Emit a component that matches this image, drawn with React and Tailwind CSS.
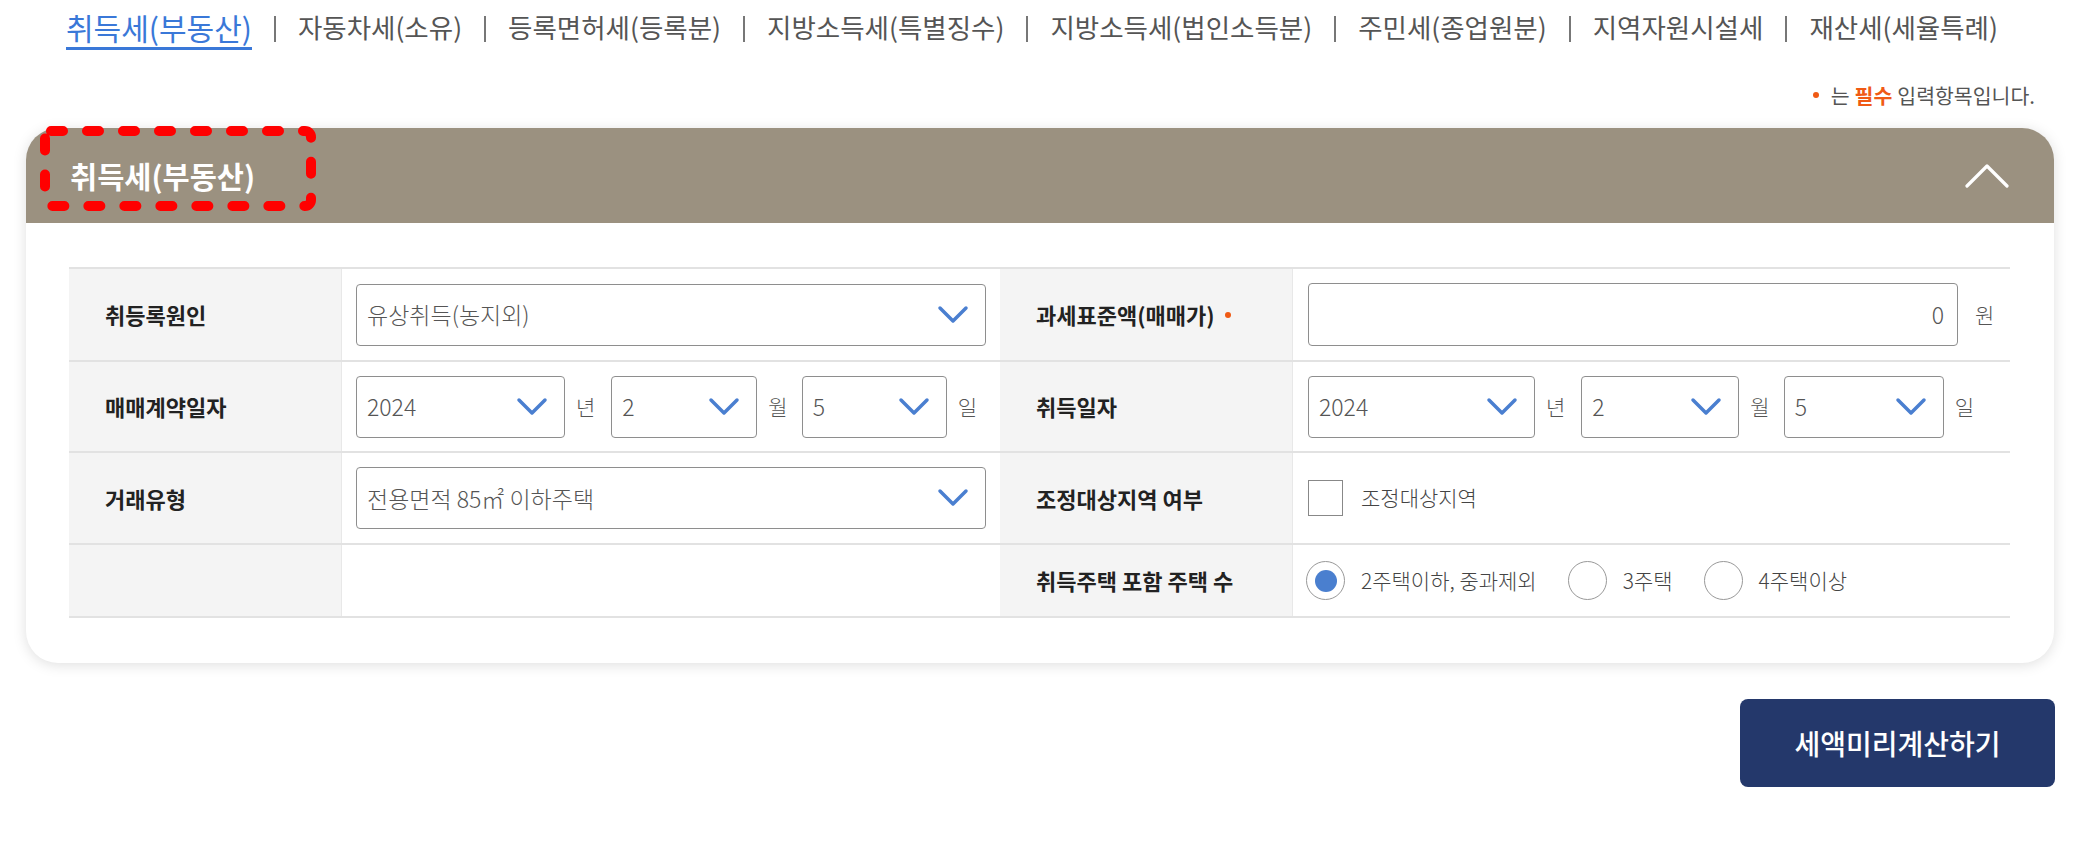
import React from "react";

const tabs = [
  "취득세(부동산)",
  "자동차세(소유)",
  "등록면허세(등록분)",
  "지방소득세(특별징수)",
  "지방소득세(법인소득분)",
  "주민세(종업원분)",
  "지역자원시설세",
  "재산세(세율특례)",
];

const Chevron = () => (
  <svg width="32" height="20" viewBox="0 0 32 20" fill="none">
    <polyline points="3,3 16,16 29,3" stroke="#4a7fd0" strokeWidth="3.5" strokeLinecap="round" strokeLinejoin="round" />
  </svg>
);

const Select = ({ value, width }) => (
  <div
    className={`flex items-center justify-between h-[62px] border border-[#8e8e8e] rounded-[4px] bg-white pl-[10px] pr-[16px] ${width}`}
  >
    <span className="text-[23px] font-light text-[#555]">{value}</span>
    <Chevron />
  </div>
);

const DateGroup = ({ widths }) => (
  <div className="flex items-center">
    <Select value="2024" width={widths[0]} />
    <span className="ml-[11px] mr-[16px] text-[21px] font-light text-[#555]">년</span>
    <Select value="2" width={widths[1]} />
    <span className="ml-[11px] mr-[14px] text-[21px] font-light text-[#555]">월</span>
    <Select value="5" width={widths[2]} />
    <span className="ml-[11px] text-[21px] font-light text-[#555]">일</span>
  </div>
);

const Label = ({ children, required }) => (
  <div className="flex items-center bg-[#f4f4f4] pl-[36px] text-[22px] font-semibold text-[#222]">
    {children}
    {required && <span className="ml-[10px] w-[6px] h-[6px] rounded-full bg-[#f05a14]"></span>}
  </div>
);

const Radio = ({ checked, label }) => (
  <div className="flex items-center">
    <div className="w-[39px] h-[39px] rounded-full border border-[#999] bg-white flex items-center justify-center">
      {checked && <div className="w-[22px] h-[22px] rounded-full bg-[#4a7fcf]"></div>}
    </div>
    <span className="ml-[16px] text-[21px] font-light text-[#444]">{label}</span>
  </div>
);

export default function App() {
  return (
    <div className="w-[2082px] min-h-[849px] bg-white font-['Noto_Sans_CJK_KR','Noto_Sans',sans-serif]">
      {/* Tabs */}
      <nav className="flex items-start pl-[66px] pt-[8px]">
        {tabs.map((t, i) => (
          <div key={t} className="flex items-start">
            {i > 0 && <span className="mx-[22px] mt-[8px] w-[2px] h-[26px] bg-[#777]"></span>}
            {i === 0 ? (
              <span className="text-[30px] leading-[38px] text-[#3a78d8] border-b-[3px] border-[#3a78d8] pb-[1px]">{t}</span>
            ) : (
              <span className="text-[26.5px] leading-[38px] text-[#555]">{t}</span>
            )}
          </div>
        ))}
      </nav>

      {/* Required note */}
      <div className="mt-[30px] pr-[47px] flex justify-end items-center h-[30px] text-[20.5px] text-[#555]">
        <span className="w-[6px] h-[6px] rounded-full bg-[#f05a14] mr-[12px]"></span>
        <span>는 </span>
        <span className="font-bold text-[#f05a14] mx-[5px]">필수</span>
        <span>입력항목입니다.</span>
      </div>

      {/* Card */}
      <section className="relative mt-[18px] ml-[26px] mr-[28px] rounded-[32px] bg-white shadow-[0_2px_14px_rgba(0,0,0,0.13)]">
        <div className="h-[95px] bg-[#9b9180] rounded-t-[32px] flex items-center justify-between pl-[44px] pr-[45px]">
          <h2 className="text-[29.5px] font-bold text-white">취득세(부동산)</h2>
          <svg width="44" height="24" viewBox="0 0 44 24" fill="none">
            <polyline points="2,22 22,2 42,22" stroke="#fff" strokeWidth="3.2" strokeLinecap="round" strokeLinejoin="round" />
          </svg>
        </div>

        {/* annotation box */}
        <svg className="absolute left-[14px] top-[-2px]" width="276" height="85" viewBox="0 0 276 85" fill="none">
          <rect x="5" y="5" width="266" height="75" rx="6" stroke="#ff0000" strokeWidth="10" strokeDasharray="12 24" strokeLinecap="round" />
        </svg>

        <div className="pt-[44px] pb-[45px] pl-[43px] pr-[44px]">
          <div className="border-t-2 border-[#e2e2e2]">
            {/* Row 1 */}
            <div className="grid grid-cols-[272px_659px_292px_1fr] h-[93px] border-b-2 border-[#e2e2e2]">
              <Label>취등록원인</Label>
              <div className="flex items-center px-[14px] border-l border-[#e8e8e8]">
                <Select value="유상취득(농지외)" width="w-full" />
              </div>
              <Label required>과세표준액(매매가)</Label>
              <div className="flex items-center pl-[15px] border-l border-[#e8e8e8]">
                <div className="flex items-center justify-end w-[650px] h-[63px] border border-[#8e8e8e] rounded-[4px] pr-[13px] text-[23px] font-light text-[#555]">
                  0
                </div>
                <span className="ml-[17px] text-[21px] font-light text-[#555]">원</span>
              </div>
            </div>

            {/* Row 2 */}
            <div className="grid grid-cols-[272px_659px_292px_1fr] h-[91px] border-b-2 border-[#e2e2e2]">
              <Label>매매계약일자</Label>
              <div className="flex items-center px-[14px] border-l border-[#e8e8e8]">
                <DateGroup widths={["w-[209px]", "w-[146px]", "w-[145px]"]} />
              </div>
              <Label>취득일자</Label>
              <div className="flex items-center pl-[15px] border-l border-[#e8e8e8]">
                <DateGroup widths={["w-[227px]", "w-[158px]", "w-[160px]"]} />
              </div>
            </div>

            {/* Row 3 */}
            <div className="grid grid-cols-[272px_659px_292px_1fr] h-[92px] border-b-2 border-[#e2e2e2]">
              <Label>거래유형</Label>
              <div className="flex items-center px-[14px] border-l border-[#e8e8e8]">
                <Select value="전용면적 85㎡ 이하주택" width="w-full" />
              </div>
              <Label>조정대상지역 여부</Label>
              <div className="flex items-center pl-[15px] border-l border-[#e8e8e8]">
                <div className="w-[35px] h-[36px] border border-[#888] bg-white"></div>
                <span className="ml-[18px] text-[21px] font-light text-[#444]">조정대상지역</span>
              </div>
            </div>

            {/* Row 4 */}
            <div className="grid grid-cols-[272px_659px_292px_1fr] h-[73px] border-b-2 border-[#e2e2e2]">
              <div className="bg-[#f4f4f4]"></div>
              <div className="border-l border-[#e8e8e8]"></div>
              <Label>취득주택 포함 주택 수</Label>
              <div className="flex items-center gap-[31px] pl-[13px] border-l border-[#e8e8e8]">
                <Radio checked label="2주택이하, 중과제외" />
                <Radio label="3주택" />
                <Radio label="4주택이상" />
              </div>
            </div>
          </div>
        </div>
      </section>

      {/* Button */}
      <div className="flex justify-end mt-[36px] pr-[27px]">
        <button className="w-[315px] h-[88px] rounded-[8px] bg-[#24386b] text-white text-[28px] font-medium">
          세액미리계산하기
        </button>
      </div>
    </div>
  );
}
